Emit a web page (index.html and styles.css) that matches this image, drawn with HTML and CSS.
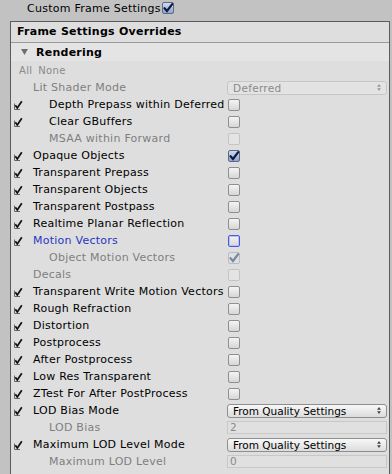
FILE: index.html
```html
<!DOCTYPE html>
<html>
<head>
<meta charset="utf-8">
<link rel="stylesheet" href="styles.css">
</head>
<body>
<div class="top">
  <span class="top-label">Custom Frame Settings</span>
  <span class="cb checked top-cb"><svg viewBox="0 0 12 12"><path d="M2.5 6.2 L5 9 L10.2 2.2" /></svg></span>
</div>
<div class="panel">
  <div class="panel-head">Frame Settings Overrides</div>
  <div class="fold"><svg class="tri" viewBox="0 0 8 7"><path d="M0 0 H8 L4 7 Z"/></svg><span>Rendering</span></div>
  <div class="allnone"><span>All</span><span>None</span></div>

  <div class="row"><span class="lc"></span><span class="lbl dis">Lit Shader Mode</span><span class="ctl"><span class="dd dis-dd"><span>Deferred</span><svg class="arr" viewBox="0 0 5 9"><path d="M2.5 0 L5 3.5 H0 Z M2.5 9 L5 5.5 H0 Z"/></svg></span></span></div>
  <div class="row"><span class="lc on"></span><span class="lbl ind">Depth Prepass within Deferred</span><span class="ctl"><span class="cb"></span></span></div>
  <div class="row"><span class="lc on"></span><span class="lbl ind">Clear GBuffers</span><span class="ctl"><span class="cb"></span></span></div>
  <div class="row"><span class="lc"></span><span class="lbl ind dis">MSAA within Forward</span><span class="ctl"><span class="cb dis-cb"></span></span></div>
  <div class="row"><span class="lc on"></span><span class="lbl">Opaque Objects</span><span class="ctl"><span class="cb checked"><svg viewBox="0 0 12 12"><path d="M2.5 6.2 L5 9 L10.2 2.2" /></svg></span></span></div>
  <div class="row"><span class="lc on"></span><span class="lbl">Transparent Prepass</span><span class="ctl"><span class="cb"></span></span></div>
  <div class="row"><span class="lc on"></span><span class="lbl">Transparent Objects</span><span class="ctl"><span class="cb"></span></span></div>
  <div class="row"><span class="lc on"></span><span class="lbl">Transparent Postpass</span><span class="ctl"><span class="cb"></span></span></div>
  <div class="row"><span class="lc on"></span><span class="lbl">Realtime Planar Reflection</span><span class="ctl"><span class="cb"></span></span></div>
  <div class="row"><span class="lc on"></span><span class="lbl blue">Motion Vectors</span><span class="ctl"><span class="cb focus"></span></span></div>
  <div class="row"><span class="lc"></span><span class="lbl ind dis">Object Motion Vectors</span><span class="ctl"><span class="cb dis-checked"><svg viewBox="0 0 12 12"><path d="M2.5 6.2 L5 9 L10.2 2.2" /></svg></span></span></div>
  <div class="row"><span class="lc"></span><span class="lbl dis">Decals</span><span class="ctl"><span class="cb dis-cb"></span></span></div>
  <div class="row"><span class="lc on"></span><span class="lbl">Transparent Write Motion Vectors</span><span class="ctl"><span class="cb"></span></span></div>
  <div class="row"><span class="lc on"></span><span class="lbl">Rough Refraction</span><span class="ctl"><span class="cb"></span></span></div>
  <div class="row"><span class="lc on"></span><span class="lbl">Distortion</span><span class="ctl"><span class="cb"></span></span></div>
  <div class="row"><span class="lc on"></span><span class="lbl">Postprocess</span><span class="ctl"><span class="cb"></span></span></div>
  <div class="row"><span class="lc on"></span><span class="lbl">After Postprocess</span><span class="ctl"><span class="cb"></span></span></div>
  <div class="row"><span class="lc on"></span><span class="lbl">Low Res Transparent</span><span class="ctl"><span class="cb"></span></span></div>
  <div class="row"><span class="lc on"></span><span class="lbl">ZTest For After PostProcess</span><span class="ctl"><span class="cb"></span></span></div>
  <div class="row"><span class="lc on"></span><span class="lbl">LOD Bias Mode</span><span class="ctl"><span class="dd"><span>From Quality Settings</span><svg class="arr" viewBox="0 0 5 9"><path d="M2.5 0 L5 3.5 H0 Z M2.5 9 L5 5.5 H0 Z"/></svg></span></span></div>
  <div class="row"><span class="lc"></span><span class="lbl ind dis">LOD Bias</span><span class="ctl"><span class="tf">2</span></span></div>
  <div class="row"><span class="lc on"></span><span class="lbl">Maximum LOD Level Mode</span><span class="ctl"><span class="dd"><span>From Quality Settings</span><svg class="arr" viewBox="0 0 5 9"><path d="M2.5 0 L5 3.5 H0 Z M2.5 9 L5 5.5 H0 Z"/></svg></span></span></div>
  <div class="row"><span class="lc"></span><span class="lbl ind dis">Maximum LOD Level</span><span class="ctl"><span class="tf">0</span></span></div>
</div>
</body>
</html>
```
FILE: styles.css
```css
* { box-sizing: border-box; }
html, body { margin: 0; padding: 0; }
body {
  background: #c2c2c2;
  font-family: "DejaVu Sans", sans-serif;
  font-size: 11px;
  letter-spacing: 0.25px;
  color: #000;
  width: 392px;
  height: 474px;
  overflow: hidden;
}
.top {
  height: 21px;
  display: flex;
  align-items: flex-start;
  padding-left: 27px;
}
.top-label { line-height: 17px; }
.top-cb { margin-top: 2px; }
.panel {
  margin-left: 10px;
  width: 380px;
  border: 1px solid #5c5c5c;
  border-bottom: none;
  background: #dedede;
  height: 453px;
}
.panel-head {
  height: 21px;
  border-bottom: 1px solid #9a9a9a;
  font-weight: bold;
  padding-left: 6px;
  padding-bottom: 1px;
  display: flex;
  align-items: center;
  background: #dedede;
}
.fold {
  height: 18px;
  background: #e4e4e4;
  display: flex;
  align-items: center;
  font-weight: bold;
}
.tri { width: 7px; height: 6px; fill: #6e6e6e; margin-left: 10px; margin-right: 8px; }
.allnone {
  height: 18px;
  display: flex;
  align-items: center;
  padding-left: 8px;
  padding-top: 1px;
  gap: 6px;
  color: #8a8a8a;
  font-size: 10px;
  letter-spacing: 0.3px;
}
.row {
  height: 17px;
  display: flex;
  align-items: center;
}
.lc {
  width: 22px;
  height: 17px;
  flex: none;
}
.lc.on {
  background: no-repeat 2px 4px / 10px 10px url("data:image/svg+xml;utf8,<svg xmlns='http://www.w3.org/2000/svg' viewBox='0 0 10 10'><path d='M1.5 3.5 V9.5 H7' fill='none' stroke='%23666' stroke-width='1'/><path d='M2.3 5.2 L4.3 8 L8.8 1.2' fill='none' stroke='%23111' stroke-width='1.7'/></svg>");
}
.lbl {
  width: 194px;
  flex: none;
  white-space: nowrap;
  line-height: 17px;
}
.lbl.ind { padding-left: 16px; }
.dis { color: #7f7f7f; }
.blue { color: #2837c2; }
.ctl {
  flex: 1;
  display: flex;
  align-items: center;
  height: 17px;
}
.cb {
  display: inline-flex;
  width: 12px;
  height: 12px;
  border: 1px solid #8f8f8f;
  border-radius: 2px;
  background: linear-gradient(#f4f4f4, #d6d6d6);
  flex: none;
  margin-left: 1px;
}
.cb svg { width: 12px; height: 12px; margin: -1px; fill: none; stroke: #0d1a48; stroke-width: 2.2; stroke-linecap: round; }
.cb.checked {
  background: linear-gradient(#d1dbea, #93a6c6);
  border-color: #5b6a88;
}
.cb.focus { border-color: #4a5ae0; box-shadow: inset 0 0 0 1px #b9c1f0; }
.cb.dis-cb { border-color: #c4c4c4; background: #e4e4e4; }
.cb.dis-checked { border-color: #bcbcbc; background: #dcdfe3; }
.cb.dis-checked svg { stroke: #7a8796; }
.dd {
  width: 160px;
  height: 14px;
  border: 1px solid #8e8e8e;
  border-radius: 3px;
  background: linear-gradient(#f8f8f8, #dcdcdc);
  display: flex;
  align-items: center;
  justify-content: space-between;
  padding: 0 5px 0 5px;
  font-size: 10.5px;
  letter-spacing: 0;
}
.dd.dis-dd { border-color: #c6c6c6; background: #e3e3e3; color: #8a8a8a; letter-spacing: 0.3px; }
.arr { width: 4px; height: 7px; fill: #444; }
.dis-dd .arr { fill: #9a9a9a; }
.tf {
  width: 160px;
  height: 13px;
  border: 1px solid #c8c8c8;
  background: #e0e0e0;
  color: #8a8a8a;
  padding-left: 2px;
  font-size: 10.5px;
  line-height: 11px;
}
```
